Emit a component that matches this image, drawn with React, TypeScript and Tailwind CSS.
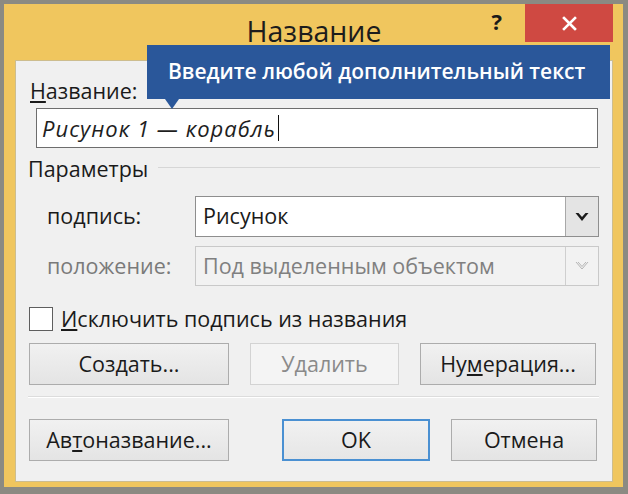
import React from "react";

function Chevron({ disabled }: { disabled?: boolean }) {
  if (disabled) {
    return (
      <svg width="14" height="10" viewBox="0 0 14 10">
        <path d="M1 1 L7 8 L13 1 M3 1 L7 5.5 L11 1" fill="none" stroke="#b5b5b5" strokeWidth="1" />
      </svg>
    );
  }
  return (
    <svg width="14" height="10" viewBox="0 0 14 10">
      <path d="M0.5 1 L7 9 L13.5 1 L10.5 1 L7 5 L3.5 1 Z" fill="#1a1a1a" />
    </svg>
  );
}

function Btn({
  children,
  w,
  variant,
}: {
  children: React.ReactNode;
  w: string;
  variant?: "disabled" | "default";
}) {
  const base =
    "h-[42px] flex items-center justify-center text-[21.5px] leading-none";
  if (variant === "disabled")
    return (
      <div className={`${base} ${w} bg-[#f4f4f4] border border-[#d3d3d3] text-[#8a8a8a]`}>
        {children}
      </div>
    );
  if (variant === "default")
    return (
      <div className={`${base} ${w} bg-gradient-to-b from-[#f1f1f1] to-[#e6e6e6] border-2 border-[#4a90d2] text-[#1a1a1a]`}>
        {children}
      </div>
    );
  return (
    <div className={`${base} ${w} bg-gradient-to-b from-[#f1f1f1] to-[#e4e4e4] border border-[#acacac] text-[#1a1a1a]`}>
      {children}
    </div>
  );
}

export default function App() {
  return (
    <div className="w-[628px] h-[494px] bg-[#8b8a82] pt-[4px] pl-[4px] pr-[5px] pb-[7px] font-['Open_Sans','Noto_Sans',sans-serif]">
      <div className="relative h-full bg-[#f0c65e] flex flex-col pl-[11px] pr-[10px] pb-[5px]">
        {/* Title bar */}
        <div className="h-[56px] flex shrink-0">
          <div className="flex-1 basis-0" />
          <div className="flex items-center text-[28.5px] text-[#1c1c1c] pb-[2px]">Название</div>
          <div className="flex-1 basis-0 flex justify-end items-start">
            <div className="mt-[6px] mr-[23px] text-[22px] font-bold leading-none text-[#1a1a1a]">?</div>
            <div className="w-[88px] h-[38px] bg-[#cf4942] flex items-center justify-center">
              <svg width="15" height="15" viewBox="0 0 15 15">
                <path d="M2 2 L13 13 M13 2 L2 13" stroke="#ffffff" strokeWidth="2.6" strokeLinecap="square" />
              </svg>
            </div>
          </div>
        </div>

        {/* Panel */}
        <div className="flex-1 bg-[#f0f0f0] border border-[#cdbd8e] flex flex-col pt-[16px] pl-[12px] pr-[13px] text-[#1a1a1a] text-[21.5px]">
          <div className="h-[28px] leading-[28px] pl-[2px]">
            <u className="underline-offset-2">Н</u>азвание:
          </div>
          <div className="mt-[3px] ml-[8px] mr-[1px] h-[40px] bg-white border border-[#6d6d6d] flex items-center pl-[5px]">
            <span className="italic text-[22px] tracking-[1px] text-[#1e1e1e]">Рисунок 1 — корабль</span>
            <span className="inline-block w-[1.5px] h-[26px] bg-[#111] ml-[2px]" />
          </div>

          <div className="mt-[7px] h-[28px] flex items-center">
            <span className="leading-[28px]">Параметры</span>
            <div className="flex-1 h-px bg-[#d6d6d6] ml-[10px] -mr-[1px] mt-[-4px]" />
          </div>

          <div className="mt-[13px] flex items-center">
            <div className="w-[167px] pl-[19px]">
              по<u className="underline-offset-2">д</u>пись:
            </div>
            <div className="flex-1 h-[41px] bg-white border border-[#8e8e8e] flex items-stretch">
              <div className="flex-1 flex items-center pl-[7px]">Рисунок</div>
              <div className="w-[33px] bg-[#e4e4e4] border-l border-[#a8a8a8] flex items-center justify-center">
                <Chevron />
              </div>
            </div>
          </div>

          <div className="mt-[9px] flex items-center">
            <div className="w-[167px] pl-[19px] text-[#7a7a7a]">положение:</div>
            <div className="flex-1 h-[40px] bg-[#f2f2f2] border border-[#c9c9c9] flex items-stretch">
              <div className="flex-1 flex items-center pl-[7px] text-[#808080]">Под выделенным объектом</div>
              <div className="w-[33px] border-l border-[#cfcfcf] flex items-center justify-center">
                <Chevron disabled />
              </div>
            </div>
          </div>

          <div className="mt-[19px] h-[28px] flex items-center pl-[1px]">
            <div className="w-[24px] h-[24px] bg-white border border-[#5e5e5e]" />
            <span className="ml-[8px] leading-[28px]">
              <u className="underline-offset-2">И</u>сключить подпись из названия
            </span>
          </div>

          <div className="mt-[10px] flex gap-[21px] pl-[1px]">
            <Btn w="w-[200px]">
              Соз<u className="underline-offset-2">д</u>ать...
            </Btn>
            <Btn w="w-[149px]" variant="disabled">
              Удалить
            </Btn>
            <Btn w="w-[176px]">
              Ну<u className="underline-offset-2">м</u>ерация...
            </Btn>
          </div>

          <div className="mt-[11px] h-[2px] border-t border-[#dcdcdc] border-b border-b-white" />

          <div className="mt-[21px] flex pl-[1px]">
            <Btn w="w-[200px]">
              Ав<u className="underline-offset-2">т</u>оназвание...
            </Btn>
            <div className="ml-[53px]">
              <Btn w="w-[148px]" variant="default">
                OK
              </Btn>
            </div>
            <div className="ml-[21px]">
              <Btn w="w-[146px]">Отмена</Btn>
            </div>
          </div>
        </div>

        {/* Tooltip */}
        <div className="absolute left-[143px] top-[41px] w-[463px] h-[54px] bg-[#2a579a] flex items-center pl-[21px]">
          <span className="text-white text-[21px] font-semibold">
            Введите любой дополнительный текст
          </span>
          <div className="absolute left-[18px] top-[54px] w-0 h-0 border-l-[7px] border-r-[7px] border-t-[10px] border-l-transparent border-r-transparent border-t-[#2a579a]" />
        </div>
      </div>
    </div>
  );
}
